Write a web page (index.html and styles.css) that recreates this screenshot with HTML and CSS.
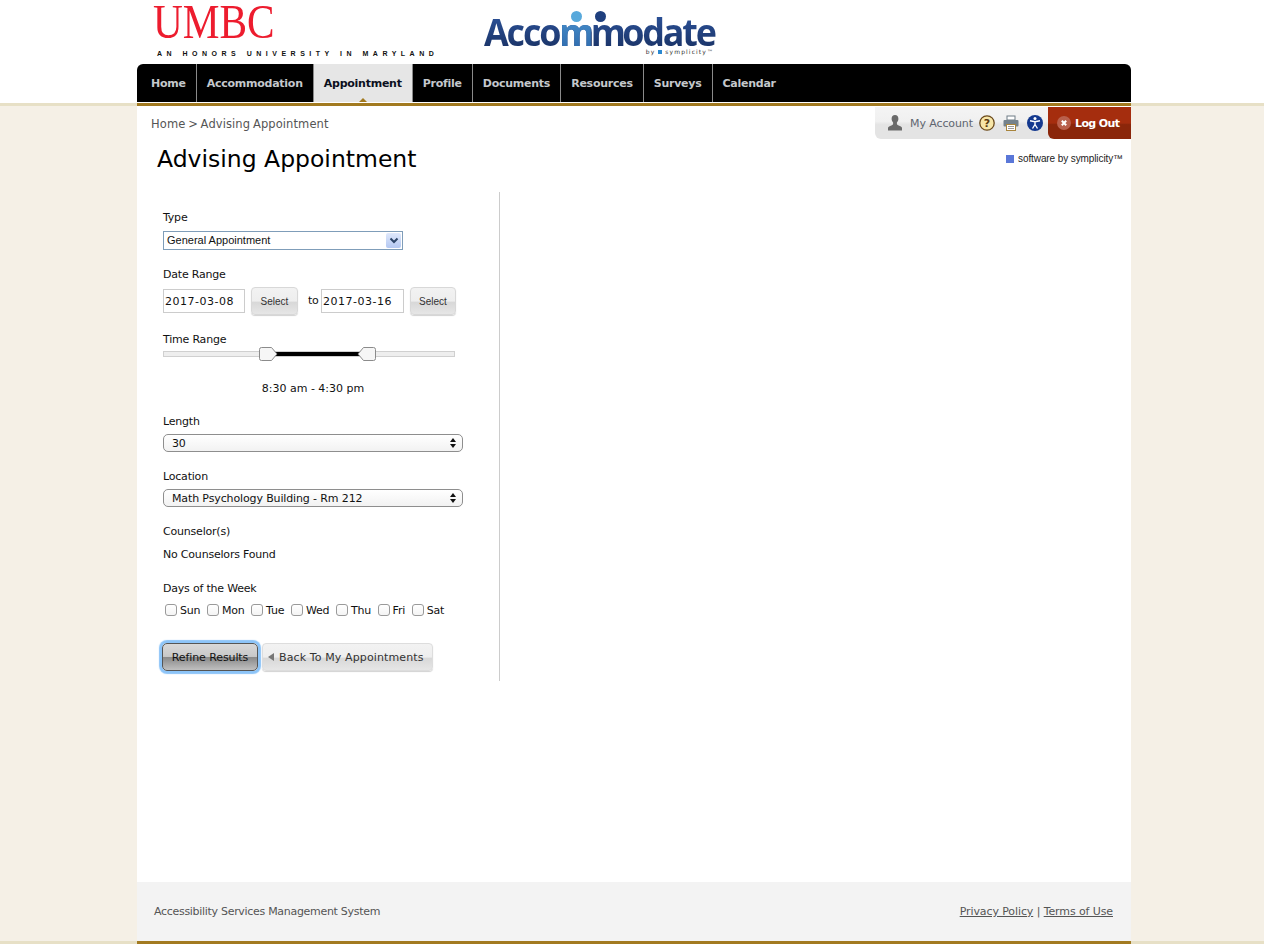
FILE: index.html
```html
<!DOCTYPE html>
<html lang="en">
<head>
    <meta charset="UTF-8">
    <meta name="viewport" content="width=device-width, initial-scale=1.0">
    <title>Advising Appointment</title>
    <link rel="stylesheet" href="styles.css">
</head>
<body>
<div class="shell">

    <!-- Logos and main menu -->
    <header class="top">
        <div class="wrap">
            <div class="logos">
                <div class="umbc">
                    <div class="umbc-name">UMBC</div>
                    <div class="umbc-tag">AN HONORS UNIVERSITY IN MARYLAND</div>
                </div>
                <div class="accommodate">
                    <div class="acc-name">Acco<span class="acc-m acc-light">m</span><span class="acc-m">m</span>odate</div>
                    <span class="acc-head acc-head-light"></span>
                    <span class="acc-head acc-head-dark"></span>
                    <div class="acc-by">by <i></i> symplicity™</div>
                </div>
            </div>
            <nav class="menu">
                <a href="#">Home</a>
                <a href="#">Accommodation</a>
                <a href="#" class="active">Appointment</a>
                <a href="#">Profile</a>
                <a href="#">Documents</a>
                <a href="#">Resources</a>
                <a href="#">Surveys</a>
                <a href="#">Calendar</a>
            </nav>
        </div>
    </header>

    <div class="rule"><div class="wrap rule-gold"></div></div>

    <main class="wrap page">
        <div class="page-top">
            <div class="page-left">
                <div class="crumbs"><a href="#">Home</a> &gt; Advising Appointment</div>
                <h1>Advising Appointment</h1>
            </div>
            <div class="page-right">
                <div class="account">
                    <a href="#" class="my-account">
                        <svg width="16" height="18" viewBox="0 0 16 18"><path d="M8 1c2.200 0 3.400 1.700 3.400 3.800 0 1.700-.8 3-1.500 3.800v1.500c0 .8 1.200 1.200 3 1.800 1.500.5 2.100 1.200 2.100 2.100v2.500H1V14c0-.9.600-1.600 2.100-2.100 1.800-.6 3-1 3-1.800V8.600C5.400 7.800 4.600 6.500 4.600 4.800 4.600 2.700 5.800 1 8 1z" fill="#6a6a6a"/></svg>
                        My Account
                    </a>
                    <svg class="ico" width="16" height="16" viewBox="0 0 16 16"><circle cx="8" cy="8" r="7.200" fill="#f7e6a8" stroke="#6b4a1c" stroke-width="1.300"/><text x="8" y="12" class="ico-q">?</text></svg>
                    <svg class="ico" width="16" height="16" viewBox="0 0 16 16"><rect x="4" y="1" width="8" height="4" fill="#fff" stroke="#6f7c86"/><rect x=".5" y="5" width="15" height="6.500" rx="1" fill="#74828c"/><rect x="3.500" y="9.500" width="9" height="6" fill="#fff" stroke="#a8843c"/><path d="M5 11.500h6M5 13.500h6" stroke="#999"/></svg>
                    <svg class="ico" width="16" height="16" viewBox="0 0 16 16"><circle cx="8" cy="8" r="8" fill="#14398f"/><circle cx="8" cy="3.600" r="1.500" fill="#fff"/><path d="M3 5.800 8 6.800l5-1M8 6.800v3M8 9.500 5.500 13.500M8 9.500l2.500 4" stroke="#fff" stroke-width="1.400" fill="none"/></svg>
                    <a href="#" class="logout">
                        <svg width="14" height="14" viewBox="0 0 14 14"><circle cx="7" cy="7" r="7" fill="#b9604c"/><path d="M4.800 4.800l4.400 4.400M9.200 4.800 4.800 9.200" stroke="#fff" stroke-width="2"/></svg>
                        Log Out
                    </a>
                </div>
                <div class="by-symplicity"><i></i>software by symplicity™</div>
            </div>
        </div>

        <form class="filters">
            <label class="field-label">Type</label>
            <div class="type-select">
                <span>General Appointment</span>
                <b><svg width="10" height="7" viewBox="0 0 10 7"><path d="M1.500 1.500 5 5l3.500-3.500" fill="none" stroke="#2c4468" stroke-width="2"/></svg></b>
            </div>

            <label class="field-label gap">Date Range</label>
            <div class="date-row">
                <input type="text" class="date" value="2017-03-08">
                <button type="button" class="select-btn">Select</button>
                <span class="to">to</span>
                <input type="text" class="date date-end" value="2017-03-16">
                <button type="button" class="select-btn select-end">Select</button>
            </div>

            <label class="field-label gap">Time Range</label>
            <div class="slider">
                <div class="slider-range"></div>
                <svg class="handle handle-from" width="19" height="14" viewBox="0 0 19 14"><path d="M2.500.5h10l5.500 6.500-5.500 6.500h-10a2 2 0 0 1-2-2v-9a2 2 0 0 1 2-2z" fill="#f6f6f6" stroke="#8b8b8b"/></svg>
                <svg class="handle handle-to" width="19" height="14" viewBox="0 0 19 14"><path d="M16.500.5h-10L1 7l5.500 6.500h10a2 2 0 0 0 2-2v-9a2 2 0 0 0-2-2z" fill="#f6f6f6" stroke="#8b8b8b"/></svg>
            </div>
            <div class="time-text">8:30 am - 4:30 pm</div>

            <label class="field-label gap-time">Length</label>
            <div class="mac-select">
                <span>30</span>
                <svg width="6" height="10" viewBox="0 0 6 10"><path d="M3 0l3 4H0zM3 10 0 6h6z" fill="#111"/></svg>
            </div>

            <label class="field-label gap">Location</label>
            <div class="mac-select">
                <span>Math Psychology Building - Rm 212</span>
                <svg width="6" height="10" viewBox="0 0 6 10"><path d="M3 0l3 4H0zM3 10 0 6h6z" fill="#111"/></svg>
            </div>

            <label class="field-label gap">Counselor(s)</label>
            <div class="none-found">No Counselors Found</div>

            <label class="field-label gap-days">Days of the Week</label>
            <div class="days">
                <label><input type="checkbox">Sun</label>
                <label><input type="checkbox">Mon</label>
                <label><input type="checkbox">Tue</label>
                <label><input type="checkbox">Wed</label>
                <label><input type="checkbox">Thu</label>
                <label><input type="checkbox">Fri</label>
                <label><input type="checkbox">Sat</label>
            </div>

            <div class="form-buttons">
                <button type="button" class="refine">Refine Results</button>
                <button type="button" class="back"><i></i>Back To My Appointments</button>
            </div>
        </form>
    </main>

    <footer class="wrap foot">
        <span class="foot-name">Accessibility Services Management System</span>
        <span class="foot-links"><a href="#">Privacy Policy</a> | <a href="#">Terms of Use</a></span>
    </footer>
    <div class="rule"><div class="wrap rule-gold"></div></div>

</div>
</body>
</html>
```

FILE: styles.css
```css
* {
    margin: 0;
    padding: 0;
    box-sizing: border-box;
}
html, body {
    height: 100%;
}
body {
    background-color: #fff;
    font-family: "DejaVu Sans", sans-serif;
    font-size: 11px;
    color: #111;
    overflow: hidden;
}
.shell {
    background-color: #f5f0e6;
}
.wrap {
    width: 994px;
    margin-left: 137px;
}

/* Header */
.top {
    background-color: #fff;
    height: 103px;
}
.logos {
    display: flex;
    height: 64px;
}
.umbc {
    width: 347px;
    padding-top: 1px;
}
.umbc-name {
    font-family: "Liberation Serif", serif;
    font-size: 48px;
    line-height: 42px;
    color: #ed1c2e;
    margin-left: 16px;
    transform: scaleX(.86);
    transform-origin: left center;
}
.umbc-tag {
    font-family: "Liberation Sans", sans-serif;
    font-size: 7px;
    font-weight: bold;
    line-height: 8px;
    letter-spacing: 4.500px;
    color: #111;
    padding-left: 20px;
    margin-top: 7px;
    white-space: nowrap;
}
.accommodate {
    position: relative;
    width: 260px;
}
.acc-name {
    font-family: "Open Sans", sans-serif;
    font-weight: 700;
    font-size: 38px;
    line-height: 34px;
    letter-spacing: -2.300px;
    margin-top: 14px;
    background: linear-gradient(#2c5299, #1b3468);
    background-clip: text;
    color: transparent;
    white-space: nowrap;
    transform: scaleX(.945);
    transform-origin: left center;
}
.acc-m {
    letter-spacing: -4px;
}
.acc-light {
    background: linear-gradient(#4f9ad4, #2a64a8);
    background-clip: text;
}
.acc-head {
    position: absolute;
    top: 11px;
    width: 11px;
    height: 11px;
    border-radius: 50%;
}
.acc-head-light {
    left: 87px;
    background-color: #58a9dc;
}
.acc-head-dark {
    left: 111px;
    background-color: #1f3f7e;
}
.acc-by {
    position: absolute;
    top: 48px;
    right: 30px;
    font-size: 6px;
    line-height: 8px;
    letter-spacing: 1.100px;
    color: #333;
    white-space: nowrap;
}
.acc-by i {
    display: inline-block;
    width: 4px;
    height: 4px;
    background-color: #2a88d0;
}

/* Main menu */
.menu {
    display: flex;
    height: 38px;
    background-color: #000;
    border-radius: 6px 6px 0 0;
}
.menu a {
    display: flex;
    align-items: center;
    position: relative;
    padding: 0 10px;
    border-right: 1px solid #8a8a8a;
    color: #c4c8cc;
    font-size: 11px;
    font-weight: bold;
    letter-spacing: -.25px;
    text-decoration: none;
    white-space: nowrap;
}
.menu a:first-child {
    padding-left: 14px;
}
.menu a:last-child {
    border-right: none;
}
.menu a.active {
    background-color: #e6e6e6;
    color: #0b1020;
}
.menu a.active::after {
    content: "";
    position: absolute;
    left: 50%;
    bottom: 0;
    margin-left: -4px;
    border: 4px solid transparent;
    border-top: none;
    border-bottom-color: #a27a20;
}

/* Lines under the header and the footer */
.rule {
    height: 3px;
    background-color: #e7e0c6;
}
.rule-gold {
    height: 3px;
    background-color: #a27a20;
}

/* Page */
.page {
    background-color: #fff;
    height: 776px;
}
.page-top {
    display: flex;
    justify-content: space-between;
    height: 86px;
}
.page-left {
    padding-top: 11px;
}
.crumbs {
    font-size: 11.500px;
    line-height: 15px;
    word-spacing: -1px;
    letter-spacing: .1px;
    color: #555;
    padding-left: 14px;
}
.crumbs a {
    color: #555;
    text-decoration: none;
}
h1 {
    font-size: 23.500px;
    font-weight: normal;
    line-height: 30px;
    color: #000;
    padding: 12px 0 0 20px;
}
.page-right {
    width: 256px;
    padding-top: 1px;
}
.account {
    display: flex;
    align-items: center;
    height: 32px;
    background: linear-gradient(#f4f4f4 0, #f0f0f0 45%, #e4e4e4 55%, #e4e4e4 100%);
    border-radius: 0 0 0 6px;
    padding-left: 12px;
}
.my-account {
    display: flex;
    flex: none;
    align-items: center;
    gap: 7px;
    color: #5f6670;
    text-decoration: none;
    font-size: 11px;
    letter-spacing: -.1px;
    width: 92px;
    white-space: nowrap;
}
.ico {
    flex: none;
}
.ico + .ico {
    margin-left: 8px;
}
.ico-q {
    font-family: "DejaVu Sans", sans-serif;
    font-size: 11px;
    font-weight: bold;
    fill: #5a3a10;
    text-anchor: middle;
}
.logout {
    display: flex;
    flex: none;
    align-items: center;
    gap: 4px;
    margin-left: auto;
    width: 83px;
    height: 32px;
    padding-left: 9px;
    background: linear-gradient(#a52d0e 0, #a52d0e 50%, #8a260a 55%, #8a260a 100%);
    border-radius: 0 0 0 6px;
    color: #fff;
    font-size: 11px;
    font-weight: bold;
    letter-spacing: -.6px;
    text-decoration: none;
    white-space: nowrap;
}
.by-symplicity {
    display: flex;
    align-items: center;
    justify-content: flex-end;
    margin-top: 13px;
    padding-right: 8px;
    font-family: "Liberation Sans", sans-serif;
    font-size: 10px;
    letter-spacing: -.1px;
    line-height: 14px;
    color: #222;
    white-space: nowrap;
}
.by-symplicity i {
    width: 8px;
    height: 8px;
    margin-right: 4px;
    background-color: #5a77d8;
}

/* Filter form */
.filters {
    width: 363px;
    height: 489px;
    border-right: 1px solid #ccc;
    padding: 18px 0 0 26px;
    letter-spacing: -.2px;
}
.field-label {
    display: block;
    line-height: 16px;
    margin-bottom: -2px;
}
.gap {
    margin-top: 17px;
}
.gap-time {
    margin-top: 19px;
}
.gap-days {
    margin-top: 20px;
}
.type-select {
    display: flex;
    align-items: center;
    justify-content: space-between;
    width: 240px;
    height: 19px;
    margin-top: 7px;
    padding: 0 1px 0 3px;
    border: 1px solid #7f9db9;
    font-family: "Liberation Sans", sans-serif;
    font-size: 11px;
    letter-spacing: 0;
}
.type-select span {
    padding-bottom: 2px;
}
.type-select b {
    display: flex;
    align-items: center;
    justify-content: center;
    width: 15px;
    height: 15px;
    background: linear-gradient(#dfe8fb, #b4c8f2);
    border-radius: 2px;
}
.date-row {
    display: flex;
    align-items: center;
    height: 28px;
    margin-top: 6px;
}
.date {
    width: 82px;
    height: 24px;
    padding-left: 1px;
    border: 1px solid #ccc;
    font-family: "DejaVu Sans", sans-serif;
    font-size: 11px;
    letter-spacing: .5px;
    color: #111;
}
.date-end {
    width: 83px;
}
.date + .select-btn {
    margin-left: 6px;
}
.select-btn {
    width: 47px;
    height: 28px;
    border: 1px solid #d8d8d8;
    border-radius: 4px;
    background: linear-gradient(#f2f2f2 0, #eeeeee 50%, #d8d8d8 55%, #e6e6e6 100%);
    box-shadow: 0 1px 1px rgba(0, 0, 0, .18);
    font-family: "Liberation Sans", sans-serif;
    font-size: 10px;
    color: #333;
}
.date + .select-end {
    width: 46px;
}
.to {
    width: 23px;
    padding: 0 0 2px 10px;
}
.slider {
    position: relative;
    width: 292px;
    height: 6px;
    margin-top: 5px;
    background-color: #eee;
    border: 1px solid #d0d0d0;
}
.slider-range {
    position: absolute;
    left: 108px;
    top: 0;
    width: 90px;
    height: 4px;
    background-color: #000;
}
.handle {
    position: absolute;
    top: -5px;
}
.handle-from {
    left: 95px;
}
.handle-to {
    left: 193px;
}
.time-text {
    width: 300px;
    margin-top: 24px;
    text-align: center;
    line-height: 16px;
    margin-bottom: -2px;
    letter-spacing: 0;
}
.mac-select {
    display: flex;
    align-items: center;
    justify-content: space-between;
    width: 300px;
    height: 18px;
    margin-top: 6px;
    padding: 0 6px 0 8px;
    border: 1px solid #8e8e8e;
    border-radius: 5px;
    background: linear-gradient(#fff, #f2f2f2);
    letter-spacing: -.13px;
}
.none-found {
    margin-top: 9px;
    line-height: 16px;
    margin-bottom: -2px;
}
.days {
    display: flex;
    height: 14px;
    margin-top: 8px;
    padding-left: 2px;
}
.days label {
    display: flex;
    align-items: center;
    margin-right: 6.600px;
}
.days input {
    appearance: none;
    width: 12px;
    height: 12px;
    margin-right: 3px;
    border: 1px solid #9a9a9a;
    border-radius: 3px;
    background: linear-gradient(#fff, #f4f4f4);
}
.form-buttons {
    display: flex;
    align-items: center;
    margin-top: 26px;
    margin-left: -1px;
}
.refine {
    width: 96px;
    height: 28px;
    border: 1px solid #555;
    border-radius: 5px;
    background: linear-gradient(#d8d8d8 0, #c8c8c8 48%, #8a8a8a 52%, #c0c0c0 100%);
    box-shadow: 0 0 1px 3px #8cc4f8;
    font-family: "DejaVu Sans", sans-serif;
    font-size: 11px;
    letter-spacing: -.1px;
    color: #111;
}
.back {
    display: flex;
    align-items: center;
    width: 171px;
    height: 28px;
    margin-left: 4px;
    padding-left: 5px;
    border: 1px solid #ddd;
    border-radius: 4px;
    background: linear-gradient(#f2f2f2 0, #eeeeee 50%, #d8d8d8 55%, #e6e6e6 100%);
    box-shadow: 0 1px 1px rgba(0, 0, 0, .18);
    font-family: "DejaVu Sans", sans-serif;
    font-size: 11px;
    letter-spacing: .12px;
    color: #333;
    white-space: nowrap;
}
.back i {
    margin-right: 5px;
    border: 4px solid transparent;
    border-left: none;
    border-right: 6px solid #777;
}

/* Footer */
.foot {
    display: flex;
    align-items: center;
    justify-content: space-between;
    height: 59px;
    padding: 0 18px 0 17px;
    background-color: #f3f3f3;
    color: #555;
}
.foot-name {
    letter-spacing: -.3px;
}
.foot-links {
    letter-spacing: -.1px;
}
.foot a {
    color: #555;
}
```
